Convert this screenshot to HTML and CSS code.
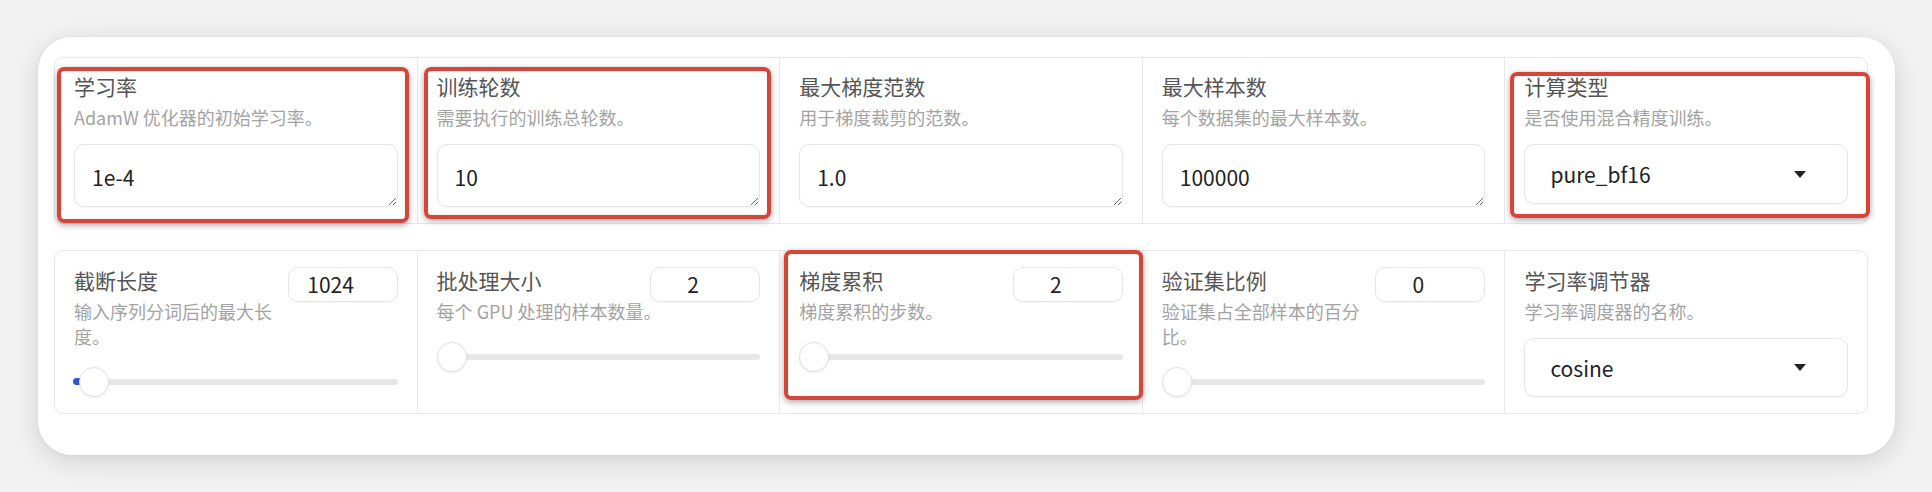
FILE: index.html
```html
<!DOCTYPE html>
<html lang="zh-CN">
<head>
<meta charset="utf-8">
<title>训练参数</title>
<link rel="stylesheet" href="styles.css">
</head>
<body>
<div class="card">
  <div class="panel">
    <div class="cell mark mark-a">
      <div class="label">学习率</div>
      <div class="info">AdamW 优化器的初始学习率。</div>
      <textarea class="textbox" rows="1">1e-4</textarea>
    </div>
    <div class="cell mark mark-b">
      <div class="label">训练轮数</div>
      <div class="info">需要执行的训练总轮数。</div>
      <textarea class="textbox" rows="1">10</textarea>
    </div>
    <div class="cell">
      <div class="label">最大梯度范数</div>
      <div class="info">用于梯度裁剪的范数。</div>
      <textarea class="textbox" rows="1">1.0</textarea>
    </div>
    <div class="cell">
      <div class="label">最大样本数</div>
      <div class="info">每个数据集的最大样本数。</div>
      <textarea class="textbox" rows="1">100000</textarea>
    </div>
    <div class="cell mark mark-c">
      <div class="label">计算类型</div>
      <div class="info">是否使用混合精度训练。</div>
      <div class="dropdown dropdown-tall"><span>pure_bf16</span><i class="caret"></i></div>
    </div>
  </div>

  <div class="panel panel-second">
    <div class="cell cell-b">
      <div class="slider-head">
        <div class="label">截断长度</div>
        <div class="num">1024</div>
        <div class="info info-narrow">输入序列分词后的最大长度。</div>
      </div>
      <div class="slider">
        <div class="track"></div>
        <div class="fill" style="width:20px"></div>
        <div class="thumb" style="left:5px"></div>
      </div>
    </div>
    <div class="cell cell-b">
      <div class="slider-head">
        <div class="label">批处理大小</div>
        <div class="num">2</div>
        <div class="info info-narrow">每个 GPU 处理的样本数量。</div>
      </div>
      <div class="slider">
        <div class="track"></div>
        <div class="thumb" style="left:0px"></div>
      </div>
    </div>
    <div class="cell cell-b mark mark-d">
      <div class="slider-head">
        <div class="label">梯度累积</div>
        <div class="num">2</div>
        <div class="info info-narrow">梯度累积的步数。</div>
      </div>
      <div class="slider">
        <div class="track"></div>
        <div class="thumb" style="left:0px"></div>
      </div>
    </div>
    <div class="cell cell-b">
      <div class="slider-head">
        <div class="label">验证集比例</div>
        <div class="num">0</div>
        <div class="info info-narrow">验证集占全部样本的百分比。</div>
      </div>
      <div class="slider">
        <div class="track"></div>
        <div class="thumb" style="left:0px"></div>
      </div>
    </div>
    <div class="cell cell-b">
      <div class="label">学习率调节器</div>
      <div class="info">学习率调度器的名称。</div>
      <div class="dropdown"><span>cosine</span><i class="caret"></i></div>
    </div>
  </div>
</div>
</body>
</html>
```

FILE: styles.css
```css
* { box-sizing: border-box; }

html, body {
  margin: 0;
  padding: 0;
}

body {
  width: 1932px;
  height: 492px;
  overflow: hidden;
  background: #f3f3f3;
  font-family: "Noto Sans CJK SC", "Noto Sans", sans-serif;
  color: #222;
}

.card {
  margin: 37px 0 0 38px;
  width: 1857px;
  height: 418px;
  background: #ffffff;
  border-radius: 34px;
  box-shadow: 0 6px 30px rgba(0, 0, 0, 0.14), 0 1px 4px rgba(0, 0, 0, 0.05);
  padding: 20px 27px 0 16px;
}

.panel {
  display: grid;
  grid-template-columns: repeat(5, 1fr);
  gap: 1px;
  background: #e8e8e8;
  border: 1px solid #e8e8e8;
  border-radius: 9px;
}

.panel-second {
  margin-top: 26px;
}

.cell {
  position: relative;
  background: #ffffff;
  padding: 15px 19px 16px 19px;
  min-width: 0;
}

.panel .cell:first-child { border-radius: 8px 0 0 8px; }
.panel .cell:last-child { border-radius: 0 8px 8px 0; }

.cell-b {
  padding-top: 16px;
}

.label {
  font-size: 21px;
  line-height: 26px;
  color: #555555;
  white-space: nowrap;
}

.info {
  margin-top: 6px;
  font-size: 18px;
  line-height: 25px;
  color: #a3a3a3;
}

.textbox {
  display: block;
  width: 100%;
  height: 63px;
  margin-top: 14px;
  padding: 20px 17px;
  font-family: inherit;
  font-size: 21px;
  line-height: 24px;
  color: #222;
  border: 1px solid #e6e6e6;
  border-radius: 10px;
  background: #fff;
  box-shadow: 0 1px 2px rgba(0, 0, 0, 0.04);
  resize: vertical;
  outline: none;
  overflow: hidden;
}

.dropdown {
  margin-top: 14px;
  height: 59px;
  border: 1px solid #e6e6e6;
  border-radius: 10px;
  box-shadow: 0 1px 2px rgba(0, 0, 0, 0.04);
  display: flex;
  align-items: center;
  justify-content: space-between;
  padding: 0 41px 0 25px;
  font-size: 21px;
  color: #222;
}

.dropdown-tall {
  height: 60px;
}

.caret {
  display: block;
  width: 0;
  height: 0;
  border-left: 6px solid transparent;
  border-right: 6px solid transparent;
  border-top: 7px solid #222;
}

/* slider header */
.slider-head {
  display: grid;
  grid-template-columns: 1fr 110px;
  grid-template-rows: 26px auto;
}

.slider-head .label {
  grid-column: 1;
  grid-row: 1;
}

.slider-head .num {
  grid-column: 2;
  grid-row: 1 / 3;
  align-self: start;
  height: 35px;
  border: 1px solid #e6e6e6;
  border-radius: 10px;
  box-shadow: 0 1px 2px rgba(0, 0, 0, 0.04);
  font-size: 21px;
  line-height: 33px;
  text-align: center;
  padding: 0 32px 0 8px;
  color: #222;
}

.slider-head .info {
  grid-column: 1 / 3;
  grid-row: 2;
}

.info-narrow {
  max-width: 226px;
}

.slider {
  position: relative;
  height: 30px;
  margin-top: 18px;
}

.track {
  position: absolute;
  left: 0;
  right: 0;
  top: 12px;
  height: 6px;
  border-radius: 3px;
  background: #e7e7e7;
}

.fill {
  position: absolute;
  left: -1px;
  top: 11px;
  height: 7px;
  border-radius: 4px;
  background: #2f56d6;
}

.thumb {
  position: absolute;
  top: 0;
  width: 30px;
  height: 30px;
  border-radius: 50%;
  background: #ffffff;
  border: 1px solid #e2e2e2;
  box-shadow: 0 1px 3px rgba(0, 0, 0, 0.08);
}

/* red annotation frames drawn over the highlighted fields */
.mark::after {
  content: "";
  position: absolute;
  border: 4px solid #d4463a;
  border-radius: 7px;
  box-shadow: 0 2px 6px rgba(0, 0, 0, 0.35), inset 0 0 2px rgba(0, 0, 0, 0.15);
  pointer-events: none;
  z-index: 2;
}

.mark-a::after { left: 2px; top: 9px; right: 8px; bottom: 0; }
.mark-b::after { left: 6px; top: 9px; right: 8px; bottom: 4px; }
.mark-c::after { left: 5px; top: 14px; right: -3px; bottom: 5px; }
.mark-d::after { left: 4px; top: -1px; right: -1px; bottom: 13px; }
```
